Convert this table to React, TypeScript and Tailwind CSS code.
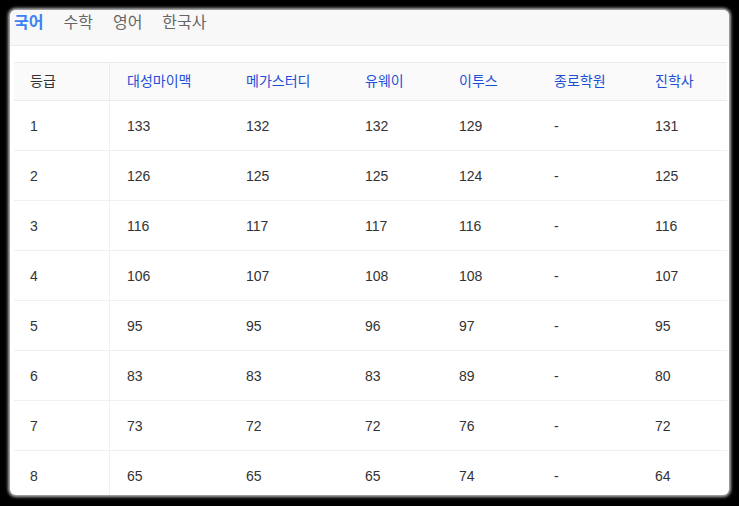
const TABS = ["국어", "수학", "영어", "한국사"];

const HEADERS = ["대성마이맥", "메가스터디", "유웨이", "이투스", "종로학원", "진학사"];

const ROWS: (string | number)[][] = [
  [1, 133, 132, 132, 129, "-", 131],
  [2, 126, 125, 125, 124, "-", 125],
  [3, 116, 117, 117, 116, "-", 116],
  [4, 106, 107, 108, 108, "-", 107],
  [5, 95, 95, 96, 97, "-", 95],
  [6, 83, 83, 83, 89, "-", 80],
  [7, 73, 72, 72, 76, "-", 72],
  [8, 65, 65, 65, 74, "-", 64],
];

const GRID = "grid grid-cols-[96px_119px_119px_94px_95px_101px_1fr]";

export default function App() {
  return (
    <div
      className="w-[739px] h-[506px] bg-black pt-[10px] pl-[10px] pr-[10px] pb-[11px]"
      style={{ fontFamily: '"Liberation Sans", Arial, "Noto Sans CJK KR", sans-serif' }}
    >
      <div className="h-full bg-white rounded-[6px] overflow-hidden pl-[4px] pr-[2px] shadow-[0_0_3px_2px_rgba(200,200,200,0.9)]">
        {/* subject tabs */}
        <div className="h-[36px] -ml-[4px] -mr-[2px] pl-[4px] bg-[#f8f8f8] border-b border-[#ebebeb] flex items-start pt-[1px] gap-5 text-[16px]">
          {TABS.map((t, i) => (
            <span
              key={t}
              className={i === 0 ? "text-[#3b82f6] font-bold" : "text-[#666]"}
            >
              {t}
            </span>
          ))}
        </div>

        <div className="mt-[16px] text-[14px] text-[#333]">
          <div className={`${GRID} h-[39px] bg-[#fafafa] border-y border-[#ebebeb] items-center`}>
            <div className="pl-4 h-full flex items-center border-r border-[#ebebeb]">등급</div>
            {HEADERS.map((h) => (
              <div key={h} className="pl-[17px] text-[#1d4ed8]">
                {h}
              </div>
            ))}
          </div>
          {ROWS.map((row) => (
            <div key={row[0]} className={`${GRID} h-[50px] border-b border-[#f0f0f0]`}>
              {row.map((v, j) => (
                <div
                  key={j}
                  className={
                    j === 0
                      ? "pl-4 pt-[2px] flex items-center border-r border-[#f0f0f0]"
                      : "pl-[17px] pt-[2px] flex items-center"
                  }
                >
                  {v}
                </div>
              ))}
            </div>
          ))}
        </div>
      </div>
    </div>
  );
}
